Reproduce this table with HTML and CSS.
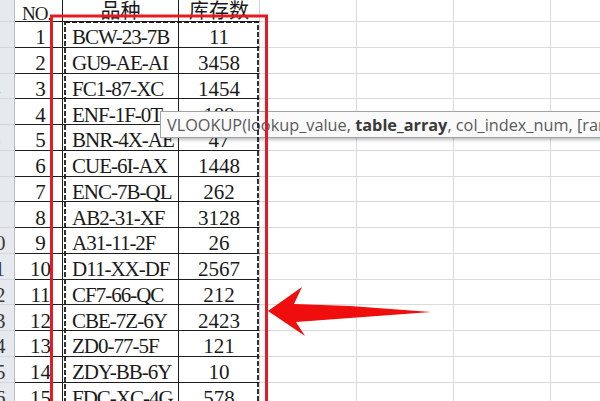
FILE: index.html
```html
<!DOCTYPE html>
<html>
<head>
<meta charset="utf-8">
<link rel="stylesheet" href="styles.css">
</head>
<body>
<div class="sheet">
  <div class="row head"><div class="h"></div><div class="c n"><span>NO.</span></div><div class="c t"><span class="cjk">品种</span></div><div class="c q"><span class="cjk">库存数</span></div><div class="e"></div><div class="e"></div><div class="e"></div><div class="e"></div></div>
  <div class="row"><div class="h"><span>2</span></div><div class="c n"><span>1</span></div><div class="c b"><span>BCW-23-7B</span></div><div class="c q"><span>11</span></div><div class="e"></div><div class="e"></div><div class="e"></div><div class="e"></div></div>
  <div class="row"><div class="h"><span>3</span></div><div class="c n"><span>2</span></div><div class="c b"><span>GU9-AE-AI</span></div><div class="c q"><span>3458</span></div><div class="e"></div><div class="e"></div><div class="e"></div><div class="e"></div></div>
  <div class="row"><div class="h"><span>4</span></div><div class="c n"><span>3</span></div><div class="c b"><span>FC1-87-XC</span></div><div class="c q"><span>1454</span></div><div class="e"></div><div class="e"></div><div class="e"></div><div class="e"></div></div>
  <div class="row"><div class="h"><span>5</span></div><div class="c n"><span>4</span></div><div class="c b"><span>ENF-1F-0T</span></div><div class="c q"><span>189</span></div><div class="e"></div><div class="e"></div><div class="e"></div><div class="e"></div></div>
  <div class="row"><div class="h"><span>6</span></div><div class="c n"><span>5</span></div><div class="c b"><span>BNR-4X-AE</span></div><div class="c q"><span>47</span></div><div class="e"></div><div class="e"></div><div class="e"></div><div class="e"></div></div>
  <div class="row"><div class="h"><span>7</span></div><div class="c n"><span>6</span></div><div class="c b"><span>CUE-6I-AX</span></div><div class="c q"><span>1448</span></div><div class="e"></div><div class="e"></div><div class="e"></div><div class="e"></div></div>
  <div class="row"><div class="h"><span>8</span></div><div class="c n"><span>7</span></div><div class="c b"><span>ENC-7B-QL</span></div><div class="c q"><span>262</span></div><div class="e"></div><div class="e"></div><div class="e"></div><div class="e"></div></div>
  <div class="row"><div class="h"><span>9</span></div><div class="c n"><span>8</span></div><div class="c b"><span>AB2-31-XF</span></div><div class="c q"><span>3128</span></div><div class="e"></div><div class="e"></div><div class="e"></div><div class="e"></div></div>
  <div class="row"><div class="h"><span>10</span></div><div class="c n"><span>9</span></div><div class="c b"><span>A31-11-2F</span></div><div class="c q"><span>26</span></div><div class="e"></div><div class="e"></div><div class="e"></div><div class="e"></div></div>
  <div class="row"><div class="h"><span>11</span></div><div class="c n"><span>10</span></div><div class="c b"><span>D11-XX-DF</span></div><div class="c q"><span>2567</span></div><div class="e"></div><div class="e"></div><div class="e"></div><div class="e"></div></div>
  <div class="row"><div class="h"><span>12</span></div><div class="c n"><span>11</span></div><div class="c b"><span>CF7-66-QC</span></div><div class="c q"><span>212</span></div><div class="e"></div><div class="e"></div><div class="e"></div><div class="e"></div></div>
  <div class="row"><div class="h"><span>13</span></div><div class="c n"><span>12</span></div><div class="c b"><span>CBE-7Z-6Y</span></div><div class="c q"><span>2423</span></div><div class="e"></div><div class="e"></div><div class="e"></div><div class="e"></div></div>
  <div class="row"><div class="h"><span>14</span></div><div class="c n"><span>13</span></div><div class="c b"><span>ZD0-77-5F</span></div><div class="c q"><span>121</span></div><div class="e"></div><div class="e"></div><div class="e"></div><div class="e"></div></div>
  <div class="row"><div class="h"><span>15</span></div><div class="c n"><span>14</span></div><div class="c b"><span>ZDY-BB-6Y</span></div><div class="c q"><span>10</span></div><div class="e"></div><div class="e"></div><div class="e"></div><div class="e"></div></div>
  <div class="row"><div class="h"><span>16</span></div><div class="c n"><span>15</span></div><div class="c b"><span>FDC-XC-4G</span></div><div class="c q"><span>578</span></div><div class="e"></div><div class="e"></div><div class="e"></div><div class="e"></div></div>
</div>

<div class="tooltip">VLOOKUP(lookup_value, <b>table_array</b>, col_index_num, [range_lookup])</div>

<svg class="overlay" width="600" height="401" viewBox="0 0 600 401">
  <rect x="65" y="22" width="193" height="400" fill="none" stroke="#1c1c1c" stroke-width="1.8" stroke-dasharray="5 2"/>
  <polyline points="51.5,410 51.5,16 266.5,16 266.5,410" fill="none" stroke="#e41b22" stroke-width="3"/>
  <polygon points="268,311 302,287 294,304 350,306 431,312 350,318 296,322 305,336" fill="#f00d0d"/>
</svg>
</body>
</html>
```

FILE: styles.css
```css
html, body {
  margin: 0;
  padding: 0;
  width: 600px;
  height: 401px;
  overflow: hidden;
  background: #ffffff;
}

body {
  position: relative;
  font-family: "Liberation Serif", serif;
}

.sheet {
  margin: -8px 0 0 -24px;
  display: flex;
  flex-direction: column;
}

.row {
  display: grid;
  grid-template-columns: 39px 48px 116px 81px 97px 97px 97px 97px;
  height: 25.75px;
}

.row.head {
  height: 30px;
}

.row > div {
  box-sizing: border-box;
  display: flex;
  align-items: flex-end;
  justify-content: center;
  overflow: visible;
  white-space: nowrap;
}

.row > div > span {
  display: inline-block;
  line-height: 1;
  font-size: 21px;
  margin-bottom: -1.5px;
}

.h {
  background: #e6e9ee;
  border-right: 1px solid #b9bfc7;
  border-bottom: 1px solid #d2d6dc;
  color: #3a3a3a;
}

.c {
  border-right: 1px solid #1e1e1e;
  border-bottom: 1px solid #1e1e1e;
  color: #1a1a1a;
}

.c.n {
  padding-left: 4px;
}

.head .c.n {
  justify-content: flex-start;
  padding-left: 7px;
}

.head .c.n > span {
  font-size: 19px;
  letter-spacing: -1px;
}

.c.b {
  justify-content: flex-start;
  padding-left: 9px;
}

.c.b > span {
  letter-spacing: -1px;
}

.c.q {
  border-right: 1px solid #d6d6d6;
}

.row > div > span.cjk {
  font-family: "Noto Sans CJK SC", sans-serif;
  font-size: 20px;
  margin-bottom: 1px;
}

.e {
  border-right: 1px solid #dadada;
  border-bottom: 1px solid #dadada;
}

.tooltip {
  position: absolute;
  left: 160px;
  top: 111px;
  width: 520px;
  height: 27px;
  box-sizing: border-box;
  padding: 0 0 0 6px;
  background: #fafafa;
  border: 1px solid #a3a3a3;
  box-shadow: 2px 2px 3px rgba(0, 0, 0, 0.25);
  font-family: "Open Sans", sans-serif;
  font-size: 16.3px;
  line-height: 26px;
  color: #5b5b5b;
  white-space: nowrap;
}

.tooltip b {
  color: #3a3a3a;
  font-weight: 700;
}

.overlay {
  position: absolute;
  left: 0;
  top: 0;
  pointer-events: none;
}
```
